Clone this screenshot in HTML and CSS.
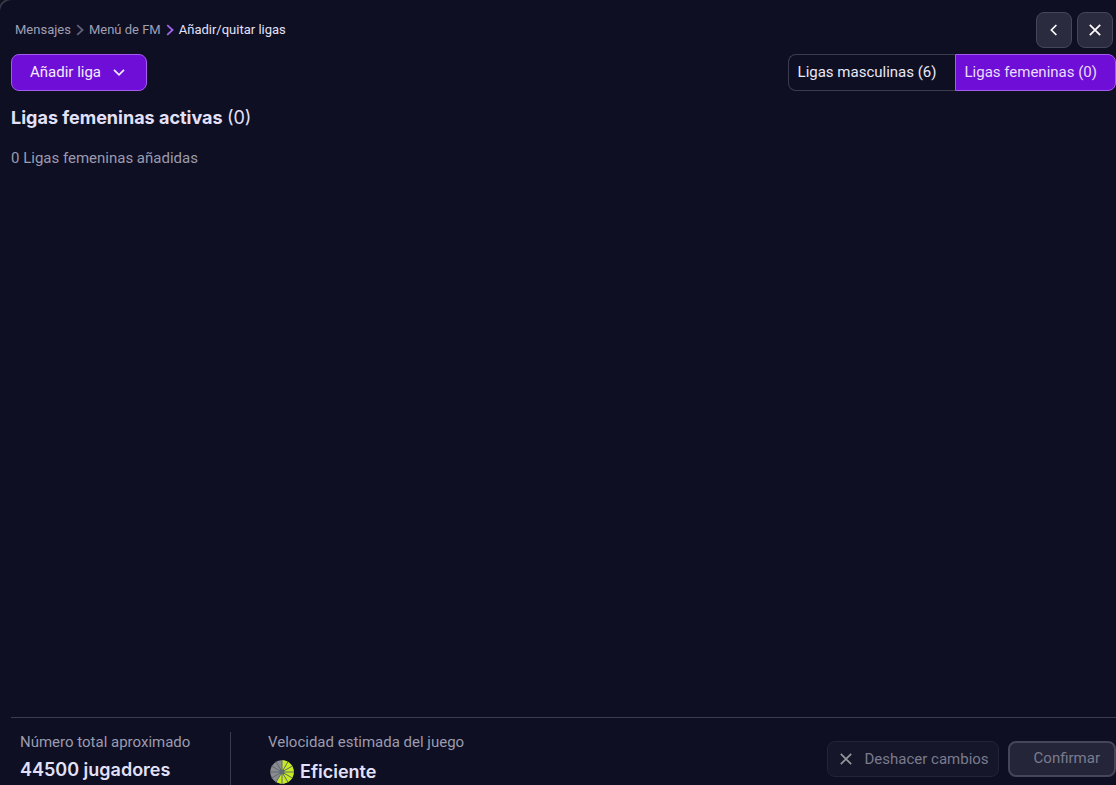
FILE: index.html
```
<!DOCTYPE html>
<html lang="es">
<head>
<meta charset="utf-8">
<meta name="viewport" content="width=device-width, initial-scale=1">
<title>Añadir/quitar ligas</title>
<link rel="stylesheet" href="styles.css">
</head>
<body>
<div class="screen">
  <header class="topbar">
    <nav class="crumbs" aria-label="Ruta">
      <a class="crumb" href="#">Mensajes</a>
      <svg class="crumb-sep" viewBox="0 0 8 12" aria-hidden="true"><path d="M1.2 1.2 6.6 6 1.2 10.8"/></svg>
      <a class="crumb" href="#">Menú de FM</a>
      <svg class="crumb-sep crumb-sep-active" viewBox="0 0 8 12" aria-hidden="true"><path d="M1.2 1.2 6.6 6 1.2 10.8"/></svg>
      <a class="crumb crumb-current" href="#" aria-current="page">Añadir/quitar ligas</a>
    </nav>
    <div class="window-actions">
      <button class="icon-button" type="button" aria-label="Atrás">
        <svg class="icon" viewBox="0 0 12 12" aria-hidden="true"><path d="M8.4 1 3.4 6l5 5"/></svg>
      </button>
      <button class="icon-button" type="button" aria-label="Cerrar">
        <svg class="icon" viewBox="0 0 12 12" aria-hidden="true"><path d="m.8.8 10.4 10.4M11.2.8.8 11.2"/></svg>
      </button>
    </div>
  </header>

  <div class="toolbar">
    <button class="add-button" type="button">
      Añadir liga
      <svg class="icon" viewBox="0 0 12 12" aria-hidden="true"><path d="m1 3.8 5 5 5-5"/></svg>
    </button>
    <div class="tabs">
      <button class="tab" type="button" aria-pressed="false">Ligas masculinas (6)</button>
      <button class="tab tab-active" type="button" aria-pressed="true">Ligas femeninas (0)</button>
    </div>
  </div>

  <main class="content">
    <h1 class="title">Ligas femeninas activas <span class="title-count">(0)</span></h1>
    <p class="summary">0 Ligas femeninas añadidas</p>
  </main>

  <footer class="footer">
    <section class="stat stat-players">
      <p class="stat-label">Número total aproximado</p>
      <p class="stat-value">44500 jugadores</p>
    </section>
    <section class="stat stat-speed">
      <p class="stat-label">Velocidad estimada del juego</p>
      <p class="stat-value">
        <svg class="gauge" viewBox="0 0 24 24" aria-hidden="true">
          <circle class="gauge-off" cx="12" cy="12" r="11.7"/>
          <path class="gauge-on" d="M12 12V.3a11.7 11.7 0 1 1-5.8 21.8z"/>
          <path class="gauge-lines" d="M12 0v24M0 12h24M6 1.6l12 20.8M1.6 6l20.8 12M1.6 18 22.4 6M6 22.4 18 1.6"/>
          <circle class="gauge-hub" cx="12" cy="12" r="2.4"/>
        </svg>
        Eficiente
      </p>
    </section>
    <div class="footer-actions">
      <button class="undo-button" type="button" disabled>
        <svg class="icon" viewBox="0 0 12 12" aria-hidden="true"><path d="m.8.8 10.4 10.4M11.2.8.8 11.2"/></svg>
        Deshacer cambios
      </button>
      <button class="confirm-button" type="button" disabled>Confirmar</button>
    </div>
  </footer>
</div>
</body>
</html>
```
FILE: styles.css
```
* {
  box-sizing: border-box;
}

body {
  margin: 0;
  background: #10111c;
  color: #e3e1fa;
  font-family: Roboto, "Liberation Sans", sans-serif;
  font-size: 15px;
  line-height: 20px;
}

button {
  margin: 0;
  font: inherit;
}

h1,
p {
  margin: 0;
}

svg {
  flex: none;
  fill: none;
  stroke: currentColor;
}

.screen {
  display: flex;
  flex-direction: column;
  height: 100vh;
  padding: 12px 0 0 11px;
  background: #0e0f22;
  border-top-left-radius: 12px;
  box-shadow: 0 0 0 2px #35364a;
  overflow: hidden;
}

.topbar {
  display: flex;
  justify-content: space-between;
  padding-right: 3px;
}

.crumbs {
  display: flex;
  align-items: center;
  gap: 5px;
  height: 36px;
  padding-left: 4px;
  font-size: 13px;
}

.crumb {
  color: #a09fb4;
  text-decoration: none;
}

.crumb-current {
  color: #e3e1fa;
}

.crumb-sep {
  width: 8px;
  height: 12px;
  color: #62637a;
  stroke-width: 1.7;
}

.crumb-sep-active {
  color: #a566f5;
}

.window-actions {
  display: flex;
  gap: 5px;
}

.icon-button {
  display: grid;
  place-items: center;
  width: 36px;
  height: 36px;
  padding: 0;
  color: #fff;
  background: #2a2b3e;
  border: 1px solid #45465a;
  border-radius: 8px;
}

.icon {
  width: 12px;
  height: 12px;
  stroke-width: 1.7;
}

.toolbar {
  display: flex;
  justify-content: space-between;
  margin-top: 6px;
}

.add-button {
  display: flex;
  align-items: center;
  gap: 12px;
  height: 37px;
  padding: 0 21px 2px 18px;
  color: #f3ecff;
  background: #6e0ed6;
  border: 1px solid #a35cee;
  border-radius: 8px;
}

.tabs {
  display: flex;
}

.tab {
  height: 37px;
  padding: 0 18px 2px 9px;
  color: #e9e8f8;
  background: transparent;
  border: 1px solid #3b3c50;
  border-right: 0;
  border-radius: 8px 0 0 8px;
}

.tab-active {
  color: #ecdcff;
  background: #6e0ed6;
  border: 1px solid #a35cee;
  border-radius: 0 8px 8px 0;
}

.content {
  flex: 1;
  padding-top: 15px;
}

.title {
  font-family: Inter, "Liberation Sans", sans-serif;
  font-size: 18px;
  font-weight: 700;
  line-height: 24px;
}

.title-count {
  font-weight: 400;
}

.summary {
  margin-top: 18px;
  color: #9c9baf;
}

.footer {
  display: flex;
  height: 68px;
  border-top: 1px solid #3b3c50;
}

.stat {
  margin-top: 14px;
  padding-left: 9px;
}

.stat-players {
  width: 220px;
  border-right: 1px solid #3b3c50;
}

.stat-speed {
  padding-left: 37px;
}

.stat-label {
  color: #9c9baf;
}

.stat-value {
  display: flex;
  align-items: center;
  gap: 6px;
  margin-top: 6px;
  font-family: Inter, "Liberation Sans", sans-serif;
  font-size: 18px;
  font-weight: 600;
  line-height: 24px;
}

.stat-speed .stat-value {
  margin-top: 8px;
  padding-left: 2px;
}

.gauge {
  width: 24px;
  height: 24px;
  stroke: none;
}

.gauge-off {
  fill: #8b8b90;
}

.gauge-on {
  fill: #c8ea20;
}

.gauge-lines {
  stroke: #5c6b70;
  stroke-width: 1;
}

.gauge-hub {
  fill: #5c6b70;
}

.footer-actions {
  display: flex;
  gap: 9px;
  margin: 23px 0 0 auto;
}

.undo-button,
.confirm-button {
  display: flex;
  align-items: center;
  height: 36px;
  color: #7b7b8e;
  border-radius: 8px;
}

.undo-button {
  gap: 12px;
  padding: 0 9px 0 12px;
  background: #151629;
  border: 1px solid #232437;
}

.undo-button .icon {
  color: #95959c;
}

.confirm-button {
  padding: 0 14px 2px 24px;
  background: #242538;
  border: 2px solid #45465a;
}
```
